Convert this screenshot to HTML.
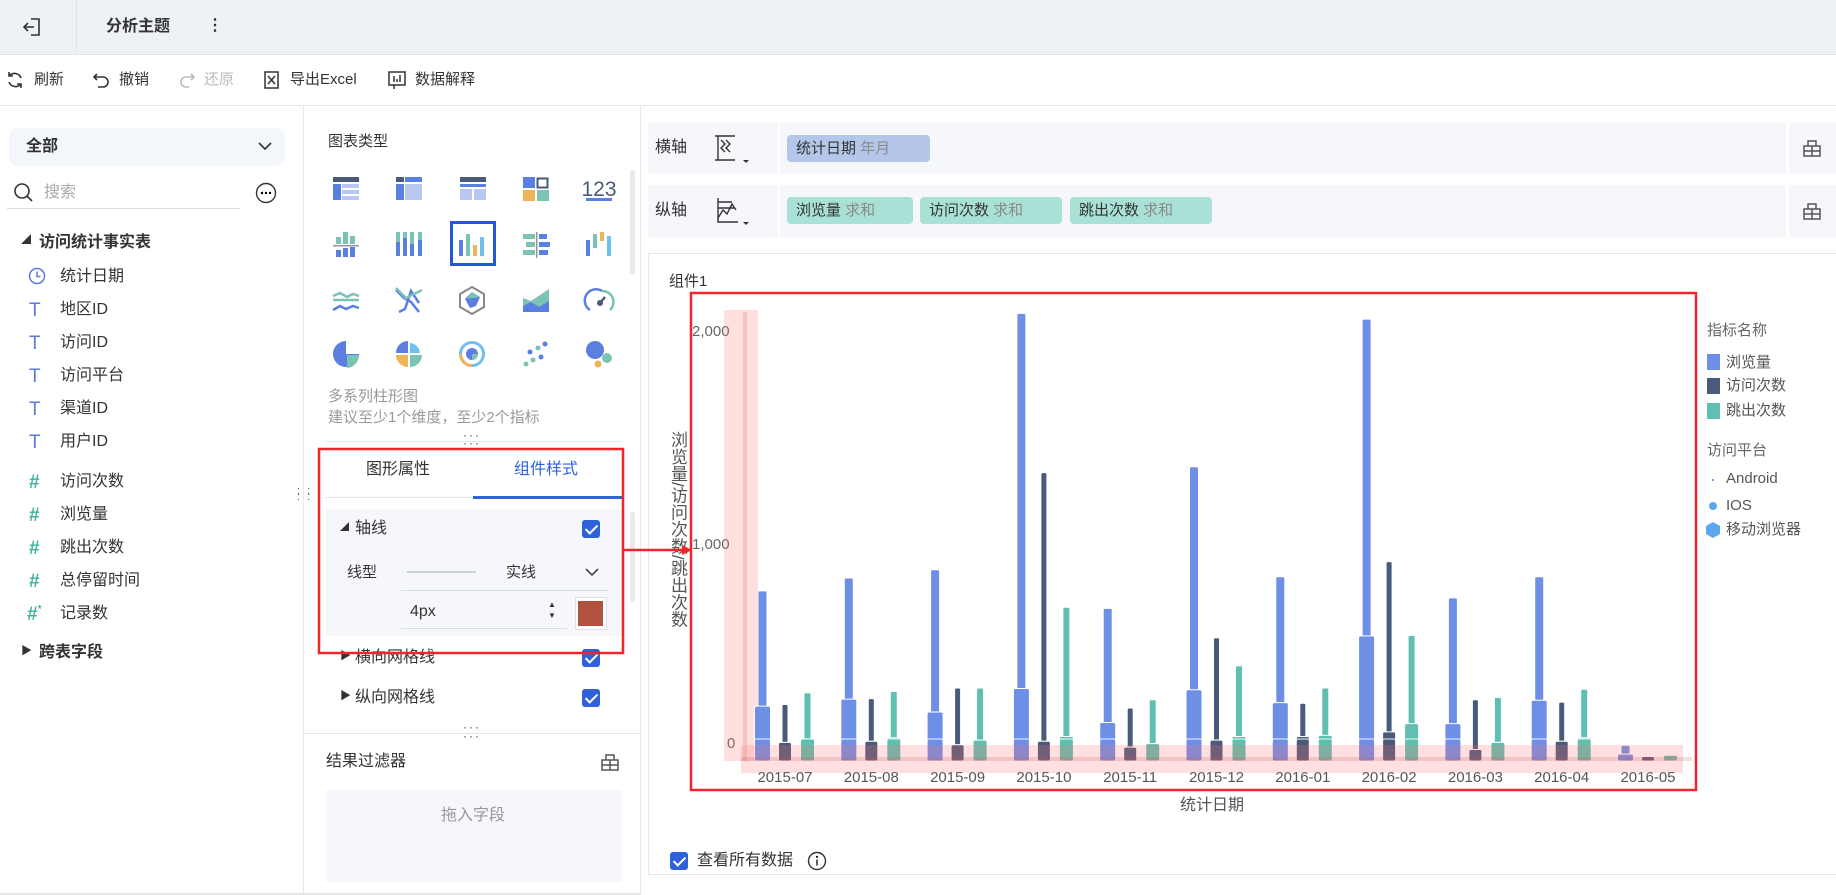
<!DOCTYPE html>
<html><head><meta charset="utf-8"><style>
*{margin:0;padding:0;box-sizing:border-box}
body{width:1836px;height:895px;overflow:hidden;background:#fff;font-family:"Liberation Sans","Noto Sans CJK SC",sans-serif;color:#333;position:relative;font-size:15px}
.a{position:absolute;white-space:nowrap}
.t{line-height:1}
.cb{position:absolute;width:18px;height:18px;background:#2f62d8;border-radius:3px}
.cb:after{content:"";position:absolute;left:6px;top:2px;width:5px;height:10px;border:solid #fff;border-width:0 2.5px 2.5px 0;transform:rotate(45deg)}
.ic{position:absolute;font-size:19px;color:#5b7bd6;line-height:1}
.hash{color:#3fb39e;font-size:19px;font-weight:bold}
.pill{position:absolute;height:27px;border-radius:4px;font-size:15px;line-height:27px;padding-left:9px}
.g{color:#8a8a8a}
</style></head><body>
<!-- header -->
<div class="a" style="left:0;top:0;width:1836px;height:55px;background:#eef1f6;border-bottom:1px solid #e0e3e8"></div>
<div class="a" style="left:76px;top:0;width:1px;height:55px;background:#e0e3e8"></div>
<svg class="a" style="left:22px;top:17px" width="22" height="20" viewBox="0 0 22 20"><path d="M9 2h8v16H9M12 10H2M6 6l-4 4 4 4" fill="none" stroke="#333" stroke-width="1.6"/></svg>
<div class="a t" style="left:106px;top:19px;font-size:16px;font-weight:bold">分析主题</div>
<div class="a t" style="left:207px;top:18px;font-size:16px;font-weight:bold">⋮</div>
<!-- toolbar -->
<div class="a" style="left:0;top:105px;width:1836px;height:1px;background:#e6e8ec"></div>
<svg class="a" style="left:6px;top:71px" width="18" height="18"><path d="M15 7A7 7 0 0 0 3 5M3 11a7 7 0 0 0 12 2" fill="none" stroke="#333" stroke-width="1.6"/><path d="M3 1v4h4M15 17v-4h-4" fill="none" stroke="#333" stroke-width="1.6"/></svg><div class="a t" style="left:34px;top:72px">刷新</div>
<svg class="a" style="left:92px;top:71px" width="18" height="18"><path d="M5 3L2 6l3 3M2 6h9a5 5 0 0 1 0 10H6" fill="none" stroke="#333" stroke-width="1.6"/></svg><div class="a t" style="left:119px;top:72px">撤销</div>
<svg class="a" style="left:178px;top:71px" width="18" height="18"><path d="M13 3l3 3-3 3M16 6H8a5 5 0 0 0 0 10h3" fill="none" stroke="#bbb" stroke-width="1.6"/></svg><div class="a t" style="left:204px;top:72px;color:#bbb">还原</div>
<svg class="a" style="left:263px;top:71px" width="18" height="18"><rect x="2" y="1" width="13" height="16" fill="none" stroke="#333" stroke-width="1.5"/><path d="M5 5l7 8M12 5l-7 8" stroke="#333" stroke-width="1.5"/></svg><div class="a t" style="left:290px;top:72px">导出Excel</div>
<svg class="a" style="left:388px;top:71px" width="18" height="19"><rect x="1" y="1" width="16" height="13" fill="none" stroke="#333" stroke-width="1.5"/><path d="M6 14v4M6 5v6M9 8v3M12 4v7" stroke="#333" stroke-width="1.5"/></svg><div class="a t" style="left:415px;top:72px">数据解释</div>

<!-- left panel -->
<div class="a" style="left:303px;top:106px;width:1px;height:789px;background:#e6e8ec"></div>
<div class="a" style="left:9px;top:128px;width:276px;height:38px;background:#f3f6fb;border-radius:9px"></div>
<div class="a t" style="left:26px;top:139px;font-weight:bold;font-size:16px">全部</div>
<svg class="a" style="left:257px;top:140px" width="16" height="12"><path d="M2 3l6 6 6-6" fill="none" stroke="#333" stroke-width="1.6"/></svg>
<svg class="a" style="left:13px;top:182px" width="22" height="22"><circle cx="9" cy="9" r="7" fill="none" stroke="#333" stroke-width="1.6"/><path d="M14 14l5 5" stroke="#333" stroke-width="1.6"/></svg>
<div class="a t" style="left:44px;top:185px;color:#aaa;font-size:16px">搜索</div>
<div class="a" style="left:7px;top:208px;width:233px;height:1px;background:#d8dbe0"></div>
<svg class="a" style="left:255px;top:182px" width="22" height="22"><circle cx="11" cy="11" r="9.5" fill="none" stroke="#333" stroke-width="1.4"/><circle cx="7" cy="11" r="1.2"/><circle cx="11" cy="11" r="1.2"/><circle cx="15" cy="11" r="1.2"/></svg>
<div class="a t" style="left:21px;top:236px;font-size:10px">◢</div>
<div class="a t" style="left:39px;top:235px;font-weight:bold;font-size:16px">访问统计事实表</div>
<svg class="a" style="left:28px;top:267px" width="18" height="18"><circle cx="9" cy="9" r="7.5" fill="none" stroke="#5b7bd6" stroke-width="1.5"/><path d="M9 4.5V9.5h3.5" fill="none" stroke="#5b7bd6" stroke-width="1.5"/></svg>
<div class="a t" style="left:60px;top:269px;font-size:16px">统计日期</div>
<div class="ic" style="left:29px;top:301px">T</div><div class="a t" style="left:60px;top:302px;font-size:16px">地区ID</div>
<div class="ic" style="left:29px;top:334px">T</div><div class="a t" style="left:60px;top:335px;font-size:16px">访问ID</div>
<div class="ic" style="left:29px;top:367px">T</div><div class="a t" style="left:60px;top:368px;font-size:16px">访问平台</div>
<div class="ic" style="left:29px;top:400px">T</div><div class="a t" style="left:60px;top:401px;font-size:16px">渠道ID</div>
<div class="ic" style="left:29px;top:433px">T</div><div class="a t" style="left:60px;top:434px;font-size:16px">用户ID</div>
<div class="a t hash" style="left:29px;top:473px">#</div><div class="a t" style="left:60px;top:474px;font-size:16px">访问次数</div>
<div class="a t hash" style="left:29px;top:506px">#</div><div class="a t" style="left:60px;top:507px;font-size:16px">浏览量</div>
<div class="a t hash" style="left:29px;top:539px">#</div><div class="a t" style="left:60px;top:540px;font-size:16px">跳出次数</div>
<div class="a t hash" style="left:29px;top:572px">#</div><div class="a t" style="left:60px;top:573px;font-size:16px">总停留时间</div>
<div class="a t hash" style="left:27px;top:605px">#<span style="font-size:10px;vertical-align:top">*</span></div><div class="a t" style="left:60px;top:606px;font-size:16px">记录数</div>
<div class="a t" style="left:21px;top:646px;font-size:11px">▶</div>
<div class="a t" style="left:39px;top:645px;font-weight:bold;font-size:16px">跨表字段</div>
<div class="a t" style="left:297px;top:488px;font-size:11px;color:#666;line-height:6px;letter-spacing:2px">: :<br>: :</div>

<!-- middle panel -->
<div class="a t" style="left:328px;top:134px;font-size:15px">图表类型</div>
<div class="a" style="left:630px;top:170px;width:5px;height:105px;background:#e8eaee;border-radius:3px"></div>
<svg class="a" style="left:320px;top:170px" width="320" height="200">
<g transform="translate(13,7)"><rect width="26" height="5" fill="#4a5a7a"/><rect y="7" width="8" height="16" fill="#5b7fe0"/><rect x="9" y="7" width="17" height="4" fill="#b9c8f2"/><rect x="9" y="13" width="17" height="4" fill="#b9c8f2"/><rect x="9" y="19" width="17" height="4" fill="#b9c8f2"/></g>
<g transform="translate(76,7)"><rect width="8" height="5" fill="#4a5a7a"/><rect x="9" width="17" height="5" fill="#5b7fe0"/><rect y="7" width="8" height="16" fill="#5b7fe0"/><rect x="9" y="7" width="17" height="16" fill="#b9c8f2"/></g>
<g transform="translate(140,7)"><rect width="26" height="5" fill="#4a5a7a"/><rect y="7" width="26" height="3" fill="#5b7fe0"/><rect y="12" width="12" height="11" fill="#b9c8f2"/><rect x="14" y="12" width="12" height="11" fill="#b9c8f2"/></g>
<g transform="translate(203,7)"><rect width="12" height="11" fill="#5b7fe0"/><rect x="14.5" y="1.5" width="10" height="9" fill="none" stroke="#4a5a7a" stroke-width="2"/><rect y="13" width="12" height="11" fill="#efb35a"/><rect x="14" y="13" width="12" height="11" fill="#7bc4b5"/></g>
<text x="279" y="26" font-size="21" fill="#4a5a7a" text-anchor="middle" font-family="Liberation Sans">123</text><rect x="266" y="28" width="26" height="3" fill="#5b7fe0"/>
<g transform="translate(13,62)"><rect x="3" y="5" width="5" height="7" fill="#7bc4b5"/><rect x="10" y="0" width="5" height="12" fill="#7bc4b5"/><rect x="17" y="4" width="5" height="8" fill="#7bc4b5"/><rect y="13" width="26" height="1.5" fill="#999"/><rect x="3" y="18" width="5" height="7" fill="#5b7fe0"/><rect x="10" y="16" width="5" height="9" fill="#5b7fe0"/><rect x="17" y="15" width="5" height="10" fill="#5b7fe0"/></g>
<g transform="translate(76,62)"><rect x="0" y="0" width="4" height="24" fill="#5b7fe0"/><rect x="0" y="0" width="4" height="10" fill="#7bc4b5"/><rect x="7" y="0" width="4" height="24" fill="#5b7fe0"/><rect x="7" y="0" width="4" height="6" fill="#7bc4b5"/><rect x="14" y="0" width="4" height="24" fill="#5b7fe0"/><rect x="14" y="0" width="4" height="12" fill="#7bc4b5"/><rect x="22" y="0" width="4" height="24" fill="#5b7fe0"/><rect x="22" y="0" width="4" height="8" fill="#7bc4b5"/></g>
<rect x="131.5" y="52.5" width="43" height="42" fill="#fff" stroke="#2557d6" stroke-width="3"/>
<g transform="translate(139,62)"><rect x="0" y="8" width="4" height="16" fill="#5b7fe0"/><rect x="7" y="2" width="4" height="22" fill="#7bc4b5"/><rect x="14" y="13" width="4" height="11" fill="#efb35a"/><rect x="21" y="5" width="4" height="19" fill="#6ec0ef"/></g>
<g transform="translate(203,62)"><rect x="0" y="2" width="12" height="5" fill="#7bc4b5"/><rect x="3" y="10" width="9" height="5" fill="#7bc4b5"/><rect x="0" y="18" width="12" height="5" fill="#7bc4b5"/><rect x="13" y="0" width="1.5" height="26" fill="#999"/><rect x="16" y="2" width="8" height="5" fill="#5b7fe0"/><rect x="16" y="10" width="11" height="5" fill="#5b7fe0"/><rect x="16" y="18" width="9" height="5" fill="#5b7fe0"/></g>
<g transform="translate(266,62)"><rect x="0" y="8" width="4" height="16" fill="#5b7fe0"/><rect x="7" y="2" width="4" height="14" fill="#7bc4b5"/><rect x="14" y="0" width="4" height="9" fill="#efb35a"/><rect x="21" y="4" width="4" height="20" fill="#6ec0ef"/></g>
<g transform="translate(13,118)" fill="none" stroke-width="2.5"><path d="M0 8l7-3 7 4 6-3 6 2M0 12h26" stroke="#7bc4b5"/><path d="M0 22l7-4 6 3 7-3 6 2" stroke="#5b7fe0"/></g>
<g transform="translate(76,118)" fill="none" stroke-width="2.5"><path d="M0 2l8 8 7 4 8 10M3 24l6-3 6-18 8 12" stroke="#5b7fe0"/><path d="M0 0l10 10 16-8" stroke="#7bc4b5"/></g>
<g transform="translate(139,116)"><path d="M13 1l12 7v13l-12 7-12-7V8z" fill="none" stroke="#888" stroke-width="2"/><path d="M13 6l8 5-4 9-6 2-5-9z" fill="#5b7fe0"/><path d="M13 6l8 5-13 2z" fill="#7bc4b5"/></g>
<g transform="translate(203,118)"><path d="M0 10l8 3 9-6 9-6v23H0z" fill="#7bc4b5"/><path d="M0 18l8-4 8 5 10-6v11H0z" fill="#5b7fe0"/></g>
<g transform="translate(266,116)" fill="none" stroke-width="2.5"><path d="M4 24A11 11 0 0 1 16 5" stroke="#5b7fe0"/><path d="M16 5A11 11 0 0 1 24 24" stroke="#7bc4b5"/><circle cx="14" cy="17" r="3" fill="#4a5a7a" stroke="none"/><path d="M14 17l5-6" stroke="#4a5a7a"/></g>
<g transform="translate(13,171)"><path d="M13 0A13 13 0 1 0 26 13H13z" fill="#5b7fe0"/><path d="M14 14h12A13 13 0 0 1 14 27z" fill="#7bc4b5"/></g>
<g transform="translate(76,171)"><path d="M12 0v12H0A12 12 0 0 1 12 0z" fill="#5b7fe0"/><path d="M14 2a11 11 0 0 1 10 10H14z" fill="#6ec0ef"/><path d="M0 14h12v12A12 12 0 0 1 0 14z" fill="#efb35a"/><path d="M14 14h12a12 12 0 0 1-12 12z" fill="#7bc4b5"/></g>
<g transform="translate(139,171)" fill="none" stroke-width="3"><circle cx="13" cy="13" r="11.5" stroke="#6ec0ef"/><path d="M1.5 13A11.5 11.5 0 0 0 13 24.5" stroke="#efb35a"/><circle cx="13" cy="13" r="6" fill="#5b7fe0" stroke="none"/><path d="M13 13h6a6 6 0 0 1-6 6z" fill="#7bc4b5" stroke="none"/></g>
<g transform="translate(203,171)"><circle cx="22" cy="3" r="2.5" fill="#5b7fe0"/><circle cx="15" cy="7" r="2.5" fill="#7bc4b5"/><circle cx="7" cy="11" r="2.5" fill="#5b7fe0"/><circle cx="18" cy="16" r="2.5" fill="#5b7fe0"/><circle cx="10" cy="19" r="2.5" fill="#7bc4b5"/><circle cx="3" cy="23" r="2.5" fill="#7bc4b5"/></g>
<g transform="translate(266,171)"><circle cx="9" cy="9" r="9" fill="#5b7fe0"/><circle cx="21" cy="17" r="5" fill="#7bc4b5"/><circle cx="12" cy="23" r="3.5" fill="#efb35a"/></g>
</svg>
<div class="a t" style="left:328px;top:389px;font-size:15px;color:#999">多系列柱形图</div>
<div class="a t" style="left:328px;top:410px;font-size:15px;color:#999">建议至少1个维度，至少2个指标</div>
<div class="a" style="left:326px;top:441px;width:296px;height:1px;background:#e3e5e9"></div>
<div class="a t" style="left:463px;top:429px;font-size:12px;color:#444;letter-spacing:2px">···</div>
<div class="a t" style="left:463px;top:437px;font-size:12px;color:#444;letter-spacing:2px">···</div>
<!-- tabs -->
<div class="a t" style="left:366px;top:462px;font-size:16px">图形属性</div>
<div class="a t" style="left:514px;top:462px;font-size:16px;color:#2f62d8">组件样式</div>
<div class="a" style="left:325px;top:497px;width:297px;height:1px;background:#e3e5e9"></div>
<div class="a" style="left:473px;top:496px;width:149px;height:3px;background:#2f62d8"></div>
<div class="a" style="left:630px;top:512px;width:5px;height:90px;background:#e8eaee;border-radius:3px"></div>
<div class="a" style="left:326px;top:509px;width:297px;height:127px;background:#f5f7fa"></div>
<div class="a t" style="left:340px;top:523px;font-size:9px">◢</div>
<div class="a t" style="left:355px;top:521px;font-size:16px">轴线</div>
<div class="cb" style="left:582px;top:520px"></div>
<div class="a t" style="left:347px;top:565px;font-size:15px">线型</div>
<div class="a" style="left:407px;top:571px;width:69px;height:2px;background:#ccd0d6"></div>
<div class="a t" style="left:506px;top:565px;font-size:15px">实线</div>
<svg class="a" style="left:584px;top:566px" width="16" height="12"><path d="M2 3l6 6 6-6" fill="none" stroke="#333" stroke-width="1.5"/></svg>
<div class="a" style="left:401px;top:590px;width:207px;height:1px;background:#d8dbe0"></div>
<div class="a t" style="left:410px;top:604px;font-size:16px">4px</div>
<div class="a t" style="left:548px;top:599px;font-size:8px;line-height:11px">▲<br>▼</div>
<div class="a" style="left:401px;top:628px;width:166px;height:1px;background:#d8dbe0"></div>
<div class="a" style="left:575px;top:597px;width:32px;height:33px;border:1px solid #dde0e5;background:#fff"></div>
<div class="a" style="left:578px;top:601px;width:25px;height:25px;background:#b35141"></div>
<div class="a t" style="left:340px;top:651px;font-size:11px">▶</div>
<div class="a t" style="left:355px;top:650px;font-size:16px">横向网格线</div>
<div class="cb" style="left:582px;top:649px"></div>
<div class="a t" style="left:340px;top:691px;font-size:11px">▶</div>
<div class="a t" style="left:355px;top:690px;font-size:16px">纵向网格线</div>
<div class="cb" style="left:582px;top:689px"></div>
<div class="a" style="left:304px;top:733px;width:337px;height:1px;background:#e3e5e9"></div>
<div class="a t" style="left:463px;top:721px;font-size:12px;color:#444;letter-spacing:2px">···</div>
<div class="a t" style="left:463px;top:730px;font-size:12px;color:#444;letter-spacing:2px">···</div>
<div class="a t" style="left:326px;top:754px;font-size:16px">结果过滤器</div>
<svg class="a" style="left:601px;top:753px" width="18" height="18"><path d="M5 7V2h8v5M1 7h16v10H1zM1 12h16M9 7v10" fill="none" stroke="#555" stroke-width="1.5"/></svg>
<div class="a" style="left:326px;top:790px;width:296px;height:92px;background:#f5f7fb"></div>
<div class="a t" style="left:441px;top:808px;font-size:16px;color:#999">拖入字段</div>
<div class="a" style="left:0;top:893px;width:640px;height:2px;background:#e3e5e9"></div>
<div class="a" style="left:640px;top:106px;width:1px;height:789px;background:#e6e8ec"></div>

<!-- axis rows -->
<div class="a" style="left:648px;top:123px;width:1138px;height:51px;background:#f5f7fb"></div>
<div class="a" style="left:1789px;top:123px;width:47px;height:51px;background:#f5f7fb"></div>
<div class="a" style="left:778px;top:123px;width:2px;height:51px;background:#fff"></div>
<div class="a t" style="left:655px;top:140px;font-size:16px">横轴</div>
<svg class="a" style="left:713px;top:134px" width="36" height="32"><path d="M2 2h20M2 26h20M5 2v24M8 6l4 4-4 4 4 4M13 6l4 4-4 4 4 4" fill="none" stroke="#333" stroke-width="1.4"/><path d="M30 26l3 3 3-3z" fill="#333"/></svg>
<div class="pill" style="left:787px;top:135px;width:143px;background:#b4c7ea">统计日期 <span class="g">年月</span></div>
<svg class="a" style="left:1803px;top:139px" width="18" height="18"><path d="M5 7V2h8v5M1 7h16v10H1zM1 12h16M9 7v10" fill="none" stroke="#555" stroke-width="1.5"/></svg>
<div class="a" style="left:648px;top:185px;width:1138px;height:52px;background:#f5f7fb"></div>
<div class="a" style="left:1789px;top:185px;width:47px;height:52px;background:#f5f7fb"></div>
<div class="a" style="left:778px;top:185px;width:2px;height:52px;background:#fff"></div>
<div class="a t" style="left:655px;top:203px;font-size:16px">纵轴</div>
<svg class="a" style="left:713px;top:196px" width="36" height="32"><path d="M5 2v24h20M5 22l5-8 4 4 5-10 4 6M5 6h14M5 12h16" fill="none" stroke="#333" stroke-width="1.4"/><path d="M30 26l3 3 3-3z" fill="#333"/></svg>
<div class="pill" style="left:787px;top:197px;width:126px;background:#a9e1d6">浏览量 <span class="g">求和</span></div>
<div class="pill" style="left:920px;top:197px;width:142px;background:#a9e1d6">访问次数 <span class="g">求和</span></div>
<div class="pill" style="left:1070px;top:197px;width:142px;background:#a9e1d6">跳出次数 <span class="g">求和</span></div>
<svg class="a" style="left:1803px;top:202px" width="18" height="18"><path d="M5 7V2h8v5M1 7h16v10H1zM1 12h16M9 7v10" fill="none" stroke="#555" stroke-width="1.5"/></svg>

<!-- chart card -->
<div class="a" style="left:648px;top:253px;width:1190px;height:622px;border:1px solid #e3e5e9"></div>
<div class="a t" style="left:669px;top:274px;font-size:15px">组件1</div>
<div class="a" style="left:667px;top:431px;writing-mode:vertical-rl;font-size:17px;line-height:20px;color:#555">浏览量/访问次数/跳出次数</div>
<div class="a t" style="left:692px;top:324px;font-size:15px;color:#666">2,000</div>
<div class="a t" style="left:692px;top:537px;font-size:15px;color:#666">1,000</div>
<div class="a t" style="left:727px;top:736px;font-size:15px;color:#666">0</div>
<div class="a t" style="left:1180px;top:798px;font-size:16px;color:#555">统计日期</div>
<div class="a t" style="left:1707px;top:323px;font-size:15px;color:#666">指标名称</div>
<div class="a" style="left:1707px;top:354px;width:13px;height:16px;background:#6e8fe6"></div><div class="a t" style="left:1726px;top:355px;font-size:15px;color:#555">浏览量</div>
<div class="a" style="left:1707px;top:378px;width:13px;height:16px;background:#4a5a7a"></div><div class="a t" style="left:1726px;top:378px;font-size:15px;color:#555">访问次数</div>
<div class="a" style="left:1707px;top:403px;width:13px;height:16px;background:#5fbfb0"></div><div class="a t" style="left:1726px;top:403px;font-size:15px;color:#555">跳出次数</div>
<div class="a t" style="left:1707px;top:443px;font-size:15px;color:#666">访问平台</div>
<div class="a" style="left:1712px;top:479px;width:2px;height:2px;background:#5aa8f0"></div><div class="a t" style="left:1726px;top:471px;font-size:15px;color:#555">Android</div>
<div class="a" style="left:1709px;top:502px;width:8px;height:8px;border-radius:50%;background:#5aa8f0"></div><div class="a t" style="left:1726px;top:498px;font-size:15px;color:#555">IOS</div>
<svg class="a" style="left:1706px;top:522px" width="14" height="16"><path d="M7 0l7 4v8l-7 4-7-4V4z" fill="#5aa8f0"/></svg><div class="a t" style="left:1726px;top:522px;font-size:15px;color:#555">移动浏览器</div>
<div class="cb" style="left:670px;top:852px"></div>
<div class="a t" style="left:697px;top:853px;font-size:16px">查看所有数据</div>
<svg class="a" style="left:807px;top:851px" width="20" height="20"><circle cx="10" cy="10" r="8.5" fill="none" stroke="#333" stroke-width="1.4"/><path d="M10 8.5v6" stroke="#333" stroke-width="1.6"/><circle cx="10" cy="5.8" r="1.1"/></svg>

<svg id="ch" class="a" style="left:0;top:0" width="1836" height="895"></svg>
<script>
var s='';
s+='<rect x="724" y="310" width="34" height="451" fill="rgba(255,110,110,0.22)"/>';
s+='<rect x="743" y="312" width="4" height="449" fill="rgba(200,90,90,0.2)"/>';
var d=[
[[505,603],[602,634],[592,631]],
[[494,597],[597,633],[591,630]],
[[487,608],[588,636],[588,632]],
[[268,588],[404,633],[519,629]],
[[520,617],[605,638],[598,635]],
[[399,589],[545,632],[569,629]],
[[493,600],[601,629],[588,628]],
[[273,543],[480,625],[543,618]],
[[511,618],[598,640],[596,634]],
[[493,598],[600,633],[589,630]],
[[637,644],[646,646],[645,645]]];
var col=['#6e8fe6','#4a5a7a','#5fbfb0'];
var tw=[8,5,6],ww=[16,13,14];
var k=1.171,bot=761;
for(var i=0;i<11;i++){var c=785+86.3*i;
 for(var j=0;j<3;j++){var x=c+(j-1)*22.5,t=d[i][j][0]*k,w=d[i][j][1]*k;
  s+='<rect x="'+(x-tw[j]/2)+'" y="'+t+'" width="'+tw[j]+'" height="'+(bot-t)+'" fill="'+col[j]+'" rx="1"/>';
  s+='<rect x="'+(x-ww[j]/2)+'" y="'+w+'" width="'+ww[j]+'" height="'+(bot-w)+'" fill="'+col[j]+'" stroke="#fff" stroke-width="1" rx="2"/>';
  var b=Math.max(w,bot-22);s+='<rect x="'+(x-ww[j]/2)+'" y="'+b+'" width="'+ww[j]+'" height="'+(bot-b)+'" fill="'+col[j]+'" stroke="#fff" stroke-width="1" rx="2" opacity="0.9"/>';}
 s+='<text x="'+c+'" y="782" font-size="15" fill="#555" text-anchor="middle" font-family="Liberation Sans">'+(i<6?'2015-'+('0'+(7+i)).slice(-2):'2016-0'+(i-5))+'</text>';}
s+='<rect x="741" y="745" width="942" height="28" fill="rgba(255,110,110,0.22)"/>';
s+='<rect x="741" y="757" width="951" height="4" fill="rgba(200,90,90,0.2)"/>';
s+='<rect x="691" y="293" width="1005" height="497" fill="none" stroke="#f0242b" stroke-width="2.5"/>';
s+='<rect x="319" y="449" width="304" height="204" fill="none" stroke="#f0242b" stroke-width="2.5"/>';
s+='<path d="M623 550h60" stroke="#f0242b" stroke-width="2.5"/><path d="M692 550l-10-5v10z" fill="#f0242b"/>';
document.getElementById('ch').innerHTML=s;
</script>
</body></html>
